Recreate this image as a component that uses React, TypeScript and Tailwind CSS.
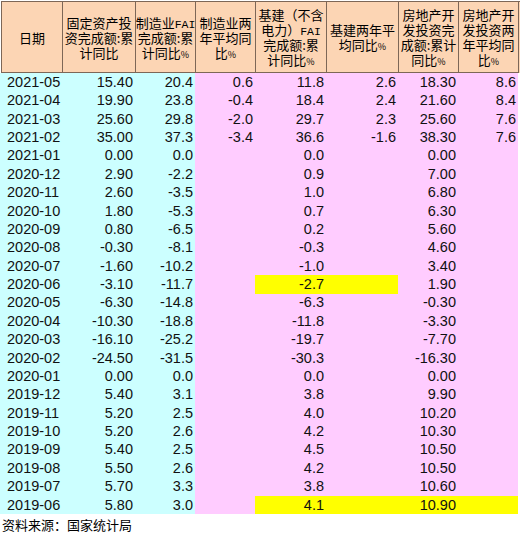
import React from "react";

type Row = {
  d: string;
  v: string[];
  y?: number[];
};

const rows: Row[] = [
  { d: "2021-05", v: ["15.40", "20.4", "0.6", "11.8", "2.6", "18.30", "8.6"] },
  { d: "2021-04", v: ["19.90", "23.8", "-0.4", "18.4", "2.4", "21.60", "8.4"] },
  { d: "2021-03", v: ["25.60", "29.8", "-2.0", "29.7", "2.3", "25.60", "7.6"] },
  { d: "2021-02", v: ["35.00", "37.3", "-3.4", "36.6", "-1.6", "38.30", "7.6"] },
  { d: "2021-01", v: ["0.00", "0.0", "", "0.0", "", "0.00", ""] },
  { d: "2020-12", v: ["2.90", "-2.2", "", "0.9", "", "7.00", ""] },
  { d: "2020-11", v: ["2.60", "-3.5", "", "1.0", "", "6.80", ""] },
  { d: "2020-10", v: ["1.80", "-5.3", "", "0.7", "", "6.30", ""] },
  { d: "2020-09", v: ["0.80", "-6.5", "", "0.2", "", "5.60", ""] },
  { d: "2020-08", v: ["-0.30", "-8.1", "", "-0.3", "", "4.60", ""] },
  { d: "2020-07", v: ["-1.60", "-10.2", "", "-1.0", "", "3.40", ""] },
  { d: "2020-06", v: ["-3.10", "-11.7", "", "-2.7", "", "1.90", ""], y: [3, 4] },
  { d: "2020-05", v: ["-6.30", "-14.8", "", "-6.3", "", "-0.30", ""] },
  { d: "2020-04", v: ["-10.30", "-18.8", "", "-11.8", "", "-3.30", ""] },
  { d: "2020-03", v: ["-16.10", "-25.2", "", "-19.7", "", "-7.70", ""] },
  { d: "2020-02", v: ["-24.50", "-31.5", "", "-30.3", "", "-16.30", ""] },
  { d: "2020-01", v: ["0.00", "0.0", "", "0.0", "", "0.00", ""] },
  { d: "2019-12", v: ["5.40", "3.1", "", "3.8", "", "9.90", ""] },
  { d: "2019-11", v: ["5.20", "2.5", "", "4.0", "", "10.20", ""] },
  { d: "2019-10", v: ["5.20", "2.6", "", "4.2", "", "10.30", ""] },
  { d: "2019-09", v: ["5.40", "2.5", "", "4.5", "", "10.50", ""] },
  { d: "2019-08", v: ["5.50", "2.6", "", "4.2", "", "10.50", ""] },
  { d: "2019-07", v: ["5.70", "3.3", "", "3.8", "", "10.60", ""] },
  { d: "2019-06", v: ["5.80", "3.0", "", "4.1", "", "10.90", ""], y: [3, 4, 5, 6] },
];

const pct = <span className="text-[9px]">%</span>;
const fai = <span className="font-['Liberation_Mono',monospace] text-[11.5px]">FAI</span>;

const headers: React.ReactNode[][] = [
  ["日期"],
  ["固定资产投", "资完成额:累", "计同比"],
  [<>制造业{fai}</>, "完成额:累", <>计同比{pct}</>],
  ["制造业两", "年平均同", <>比{pct}</>],
  ["基建（不含", <>电力）{fai}</>, "完成额:累", <>计同比{pct}</>],
  ["基建两年平", <>均同比{pct}</>],
  ["房地产开", "发投资完", "成额:累计", <>同比{pct}</>],
  ["房地产开", "发投资两", "年平均同", <>比{pct}</>],
];

export default function App() {
  return (
    <div className="w-[520px] h-[541px] bg-white overflow-hidden pl-[1px] pt-[1px]">
      <div className="grid grid-cols-[61px_73px_60px_60px_71px_72px_60px_60px] border-l border-t border-[#7d6757] bg-[#FCD5B4]">
        {headers.map((lines, i) => (
          <div
            key={i}
            className="h-[71px] border-r border-b border-[#7d6757] flex flex-col items-center justify-center text-center text-[13px] leading-[15px] text-black whitespace-nowrap font-['Noto_Sans_CJK_SC',sans-serif]"
          >
            {lines.map((l, k) => (
              <div key={k} className="h-[15px] leading-[15px]">
                {l}
              </div>
            ))}
          </div>
        ))}
      </div>
      <div className="-ml-[1px] h-[441px] flex flex-col font-['Liberation_Sans',Arial,sans-serif] text-[14.5px] text-[#111]">
        {rows.map((r) => (
          <div key={r.d} className="flex-1 min-h-0 grid grid-cols-[62px_73px_60px_60px_71px_72px_60px_60px]">
            <div className="bg-[#CCFFFF] pl-[7px] flex items-center leading-none overflow-hidden">{r.d}</div>
            {r.v.map((val, j) => {
              const yellow = r.y && r.y.includes(j);
              const bg = yellow ? "bg-[#FFFF00]" : j < 2 ? "bg-[#CCFFFF]" : "bg-[#FFCCFF]";
              return (
                <div key={j} className={`${bg} flex items-center justify-end pr-[2px] leading-none overflow-hidden`}>
                  {val}
                </div>
              );
            })}
          </div>
        ))}
      </div>
      <div className="-ml-[1px] pl-[2px] pt-[2px] text-[13px] leading-[18px] text-black font-['Noto_Sans_CJK_SC',sans-serif]">
        资料来源：国家统计局
      </div>
    </div>
  );
}
